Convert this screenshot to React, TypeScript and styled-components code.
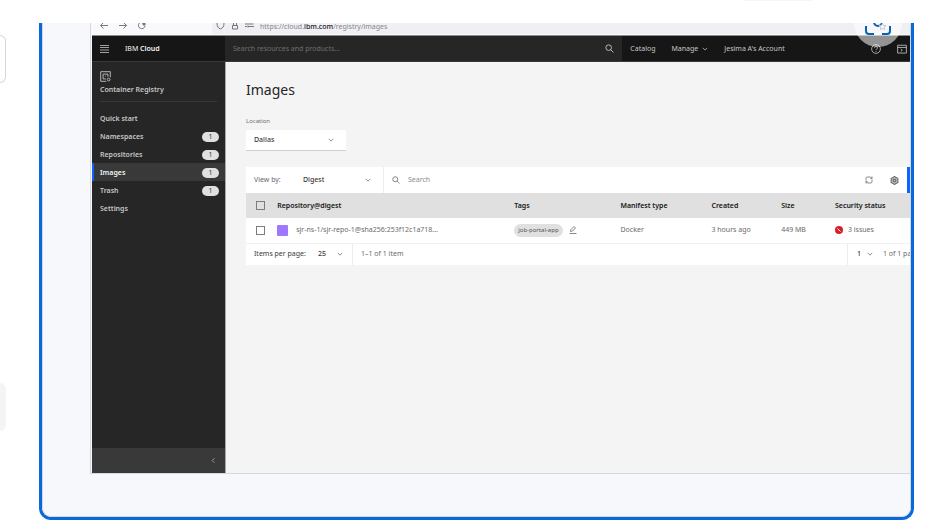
import React from "react";
import styled, { createGlobalStyle, css } from "styled-components";

const Global = createGlobalStyle`
  *, *::before, *::after { box-sizing: border-box; }
  body { margin: 0; background: #fff; }
  body, button, input, select { font-family: "Noto Sans", "Open Sans", sans-serif; font-size: 7px; line-height: 10px; }
  button, input, select { border: 0; margin: 0; padding: 0; background: none; color: inherit; border-radius: 0; outline: 0; }
  svg { display: block; flex: none; }
  h1, p { margin: 0; font-weight: 400; }
`;

const Page = styled.div`
  display: grid;
  grid-template-columns: 39px minmax(0, 1fr) 33px;
  grid-template-rows: 23px minmax(0, 1fr) 12px;
  height: 100vh;
  min-height: 320px;
`;
const PageHead = styled.div`
  grid-column: 1 / -1;
  display: flex;
  justify-content: flex-end;
  padding-right: 134px;
`;
const HeadTab = styled.div`
  width: 68px;
  height: 1px;
  background: #f6f6f7;
`;
const Rail = styled.div`
  display: flex;
  flex-direction: column;
  gap: 300px;
  padding-top: 12px;
`;
const RailCard = styled.div<{ $filled?: boolean }>`
  width: 6px;
  height: 48px;
  flex: none;
  border-radius: 0 8px 8px 0;
  ${(p) =>
    p.$filled
      ? css`background: #f3f4f6;`
      : css`border: 1px solid #d1d9e0; border-left: 0;`}
`;

const Frame = styled.section`
  position: relative;
  display: flex;
  border: 3px solid #0969da;
  border-top: 0;
  border-radius: 0 0 12px 12px;
  background: #f6f8fa;
  overflow: hidden;
`;
const FrameInner = styled.div`
  flex: 1;
  min-width: 0;
  display: flex;
  padding: 0 0 42px 47px;
  border: 1px solid #d5d9dc;
  border-top: 0;
  border-radius: 0 0 9px 9px;
  background: #f6f8fb;
`;
const Shot = styled.div`
  flex: 1;
  min-width: 0;
  display: flex;
  flex-direction: column;
  border: solid #d5d8dc;
  border-width: 0 0 1px 1px;
  padding-left: 1px;
  overflow: hidden;
`;

const BrowserBar = styled.div`
  display: flex;
  align-items: flex-start;
  height: 13px;
  flex: none;
  padding-left: 7px;
  background: #f9f9fb;
  color: #77777f;
  border-bottom: 1px solid #8b8b8d;
`;
const BarButtons = styled.div`
  display: flex;
  gap: 9px;
  width: 113px;
`;
const PlainButton = styled.button`
  display: flex;
  align-items: center;
  justify-content: center;
  flex: none;
`;
const Address = styled.div`
  flex: 1;
  display: flex;
  align-items: flex-start;
  gap: 6px;
  height: 11px;
  padding-left: 4px;
  background: #f0f0f4;
`;
const Url = styled.p`
  line-height: 7px;
  color: #85858d;
  white-space: nowrap;
  b { font-weight: 500; color: #15141a; }
`;

const TopNav = styled.header`
  display: flex;
  align-items: center;
  height: 26px;
  flex: none;
  background: #161616;
  border-bottom: 1px solid #393939;
  color: #c6c6c6;
  white-space: nowrap;
`;
const Brand = styled.div`
  display: flex;
  align-items: center;
  gap: 16px;
  width: 133px;
  flex: none;
  padding-left: 8px;
  color: #f4f4f4;
  b { font-weight: 600; }
`;
const NavSearch = styled.label`
  display: flex;
  align-items: center;
  align-self: stretch;
  flex: 397 1 0;
  min-width: 0;
  padding: 0 8px;
  background: #262626;
`;
const TextInput = styled.input<{ $tone: string }>`
  flex: 1;
  min-width: 0;
  &::placeholder { color: ${(p) => p.$tone}; opacity: 1; }
`;
const NavLinks = styled.nav`
  display: flex;
  align-items: center;
  gap: 16px;
  flex: 288 1 0;
  min-width: 0;
  padding: 0 3px 0 8px;
`;
const NavLink = styled.a`
  display: flex;
  align-items: center;
  gap: 4px;
  color: inherit;
  text-decoration: none;
`;
const NavIcons = styled.div`
  display: flex;
  gap: 16px;
  margin-left: auto;
`;

const Body = styled.div`
  display: flex;
  flex: 1;
  min-height: 0;
`;
const Sidebar = styled.aside`
  display: flex;
  flex-direction: column;
  width: 134px;
  flex: none;
  background: #262626;
  border-right: 1px solid #a8a8a8;
  color: #c6c6c6;
  font-weight: 600;
`;
const ServiceHead = styled.div`
  display: flex;
  flex-direction: column;
  gap: 3px;
  height: 40px;
  margin: 0 8px 7px;
  padding-top: 9px;
  border-bottom: 1px solid #393939;
`;
const SideItem = styled.a<{ $active?: boolean }>`
  display: flex;
  align-items: center;
  justify-content: space-between;
  height: 18px;
  padding: 2px 6px 0;
  border-left: 2px solid ${(p) => (p.$active ? "#0f62fe" : "transparent")};
  background: ${(p) => (p.$active ? "#393939" : "transparent")};
  color: ${(p) => (p.$active ? "#f4f4f4" : "inherit")};
  text-decoration: none;
`;
const Badge = styled.span`
  width: 17px;
  height: 10px;
  border-radius: 5px;
  background: #e0e0e0;
  color: #393939;
  font-weight: 400;
  text-align: center;
`;
const SideFoot = styled.div`
  display: flex;
  align-items: center;
  justify-content: flex-end;
  height: 25px;
  margin-top: auto;
  padding-right: 8px;
  background: #393939;
  color: #a8a8a8;
`;

const Main = styled.main`
  flex: 1;
  min-width: 0;
  padding: 18px 0 0 20px;
  background: #f4f4f4;
  color: #6a6a6a;
  overflow: hidden;
`;
const Title = styled.h1`
  font-size: 14px;
  line-height: 20px;
  color: #262626;
`;
const FieldLabel = styled.label`
  display: block;
  margin: 16px 0 4px;
  font-size: 6px;
  color: #6f6f6f;
`;
const SelectWrap = styled.div<{ $width: number; $pad: number; $boxed?: boolean }>`
  display: grid;
  align-items: center;
  flex: none;
  width: ${(p) => p.$width}px;
  padding-right: ${(p) => p.$pad}px;
  ${(p) => p.$boxed && css`height: 21px; padding-left: 8px; background: #fff; border-bottom: 1px solid #d0d0d0;`}
  > * { grid-area: 1 / 1; }
  > svg { justify-self: end; pointer-events: none; }
`;
const Select = styled.select`
  appearance: none;
  width: 100%;
  color: #393939;
  font-weight: 500;
`;

const Panel = styled.section`
  margin-top: 16px;
  background: #fff;
  white-space: nowrap;
`;
const Toolbar = styled.div`
  display: flex;
  align-items: center;
  height: 26px;
  padding-left: 8px;
`;
const ViewBy = styled.label`
  width: 49px;
  flex: none;
`;
const PanelSearch = styled.label`
  display: flex;
  align-items: center;
  gap: 8px;
  flex: 1;
  align-self: stretch;
  min-width: 0;
  padding-left: 8px;
  border-left: 1px solid #ededed;
`;
const Tools = styled.div`
  display: flex;
  gap: 17px;
  padding: 0 8px;
`;
const Primary = styled.button`
  width: 3px;
  align-self: stretch;
  background: #0f62fe;
`;
const Table = styled.table`
  width: 100%;
  table-layout: fixed;
  border-collapse: collapse;
  th, td { padding: 0; text-align: left; }
  th:first-child, td:first-child { padding-left: 10px; }
  th { height: 25px; background: #e0e0e0; color: #161616; font-weight: 600; }
  td { height: 25px; border-bottom: 1px solid #f0f0f0; }
`;
const Col = styled.col<{ $share: number }>`
  width: ${(p) => p.$share}%;
`;
const Check = styled.input`
  appearance: none;
  display: block;
  width: 9px;
  height: 9px;
  border: 1px solid #7c7c7c;
`;
const Cell = styled.div<{ $gap: number }>`
  display: flex;
  align-items: center;
  gap: ${(p) => p.$gap}px;
`;
const Swatch = styled.span`
  width: 11px;
  height: 11px;
  border-radius: 1px;
  background: #a078ff;
`;
const Tag = styled.span`
  height: 13px;
  padding: 0 4px;
  border-radius: 7px;
  background: #e0e0e0;
  color: #525252;
  font-size: 6px;
  line-height: 12px;
`;
const Pager = styled.div`
  display: flex;
  align-items: center;
  height: 21px;
  padding-left: 8px;
`;
const PagerLabel = styled.label`
  width: 64px;
  flex: none;
  color: #393939;
`;
const PagerSection = styled.div<{ $grow?: boolean }>`
  display: flex;
  align-items: center;
  align-self: stretch;
  flex: ${(p) => (p.$grow ? "1" : "0 0 63px")};
  min-width: 0;
  padding-left: ${(p) => (p.$grow ? 8 : 9)}px;
  border-left: 1px solid #ededed;
  overflow: hidden;
`;

const Lens = styled.div`
  position: absolute;
  top: -24px;
  right: 9px;
  display: flex;
  align-items: center;
  justify-content: center;
  width: 48px;
  height: 48px;
  border-radius: 50%;
  background: rgba(255, 255, 255, 0.54);
  pointer-events: none;
`;

const Glyph = ({ size = 10, w = 1.3, color = "currentColor", children }: { size?: number; w?: number; color?: string; children: React.ReactNode }) => (
  <svg width={size} height={size} viewBox="0 0 16 16" fill="none" stroke={color} strokeWidth={w} aria-hidden="true">
    {children}
  </svg>
);
const Chevron = () => <Glyph size={6} w={2}><path d="M2 5l6 6 6-6" /></Glyph>;
const Magnifier = ({ size = 9 }: { size?: number }) => (
  <Glyph size={size} w={1.6}><circle cx="6.5" cy="6.5" r="5" /><path d="M10.2 10.2l4.8 4.8" /></Glyph>
);

const sideItems: { label: string; count?: number; active?: boolean }[] = [
  { label: "Quick start" },
  { label: "Namespaces", count: 1 },
  { label: "Repositories", count: 1 },
  { label: "Images", count: 1, active: true },
  { label: "Trash", count: 1 },
  { label: "Settings" },
];
const columns = [
  { label: "Repository@digest", share: 35.7 },
  { label: "Tags", share: 16 },
  { label: "Manifest type", share: 13.7 },
  { label: "Created", share: 10.5 },
  { label: "Size", share: 8.1 },
  { label: "Security status", share: 11.3 },
];

export default function App() {
  return (
    <>
      <Global />
      <Page>
        <PageHead><HeadTab /></PageHead>
        <Rail><RailCard /><RailCard $filled /></Rail>
        <Frame>
          <FrameInner>
            <Shot>
              <BrowserBar>
                <BarButtons>
                  <PlainButton aria-label="Back"><svg width="10" height="7" viewBox="0 0 10 7" fill="none" stroke="currentColor"><path d="M9 2.5H1.5M4.500-.5l-3 3 3 3" /></svg></PlainButton>
                  <PlainButton aria-label="Forward"><svg width="10" height="7" viewBox="0 0 10 7" fill="none" stroke="currentColor"><path d="M1 2.500h7.500M5.500-.5l3 3-3 3" /></svg></PlainButton>
                  <PlainButton aria-label="Reload"><svg width="10" height="7" viewBox="0 0 10 7" fill="none" stroke="currentColor"><path d="M2.500 0A3.300 3.300 0 1 0 8 3" /><path d="M5 0h3.500v2.500H6z" fill="currentColor" stroke="none" /></svg></PlainButton>
                </BarButtons>
                <Address>
                  <svg width="9" height="7" viewBox="0 0 9 7" fill="none" stroke="currentColor"><path d="M1 0c0 3.500 1 5 3.500 6C7 5 8 3.500 8 0" /></svg>
                  <svg width="8" height="7" viewBox="0 0 8 7" fill="none" stroke="currentColor"><path d="M1.500 2.500h5v3.500h-5zM2.500 2.500V0M5.500 2.500V0" /></svg>
                  <svg width="9" height="7" viewBox="0 0 9 7" fill="none" stroke="currentColor"><path d="M0 1h5M7 1h1.500M3 3.500h6M0 3.500h2M6 0v2M3 2.500v2" /></svg>
                  <Url>https://cloud.<b>ibm.com</b>/registry/images</Url>
                </Address>
              </BrowserBar>
              <TopNav>
                <Brand>
                  <PlainButton aria-label="Menu">
                    <svg width="9" height="8" viewBox="0 0 9 8" stroke="#a0a0a0"><path d="M0 .5h9M0 2.500h9M0 5h9M0 7.500h9" /></svg>
                  </PlainButton>
                  <span>IBM <b>Cloud</b></span>
                </Brand>
                <NavSearch>
                  <TextInput $tone="#6f6f6f" aria-label="Search resources and products" placeholder="Search resources and products..." />
                  <Magnifier />
                </NavSearch>
                <NavLinks>
                  <NavLink href="#catalog">Catalog</NavLink>
                  <NavLink href="#manage">Manage <Chevron /></NavLink>
                  <NavLink href="#account">Jesima A's Account</NavLink>
                  <NavIcons>
                    <PlainButton aria-label="Help"><Glyph><circle cx="8" cy="8" r="7" /><path d="M5.700 6.500c0-3 4.800-3 4.800-.3C10.500 8 8 7.700 8 9.500M8 11v1.500" /></Glyph></PlainButton>
                    <PlainButton aria-label="Cloud Shell"><Glyph><path d="M1 2h14v12.500H1zM1 5.500h14M6 8l2.500 2L6 12" /></Glyph></PlainButton>
                  </NavIcons>
                </NavLinks>
              </TopNav>
              <Body>
                <Sidebar>
                  <ServiceHead>
                    <Glyph size={11}><path d="M9 15H1V1h14v8M8.500 11.500h-4v-7h7v4M7.500 7.500h1" /><circle cx="12.500" cy="12.500" r="2" /></Glyph>
                    <span>Container Registry</span>
                  </ServiceHead>
                  {sideItems.map((s) => (
                    <SideItem key={s.label} href="#" $active={s.active}>
                      {s.label}{s.count && <Badge>{s.count}</Badge>}
                    </SideItem>
                  ))}
                  <SideFoot><PlainButton aria-label="Collapse"><Glyph size={7} w={2}><path d="M10 3L5 8l5 5" /></Glyph></PlainButton></SideFoot>
                </Sidebar>
                <Main>
                  <Title>Images</Title>
                  <FieldLabel htmlFor="location">Location</FieldLabel>
                  <SelectWrap $width={100} $pad={12} $boxed>
                    <Select id="location"><option>Dallas</option></Select>
                    <Chevron />
                  </SelectWrap>
                  <Panel>
                    <Toolbar>
                      <ViewBy htmlFor="view">View by:</ViewBy>
                      <SelectWrap $width={80} $pad={12}>
                        <Select id="view"><option>Digest</option></Select>
                        <Chevron />
                      </SelectWrap>
                      <PanelSearch>
                        <Magnifier size={8} />
                        <TextInput $tone="#8d8d8d" aria-label="Search images" placeholder="Search" />
                      </PanelSearch>
                      <Tools>
                        <PlainButton aria-label="Refresh"><Glyph size={8} w={1.600}><path d="M2 9V5a3 3 0 0 1 3-3h6l3 3M14 7v4a3 3 0 0 1-3 3H5l-3-3M14 1v4h-3M2 15v-4h3" /></Glyph></PlainButton>
                        <PlainButton aria-label="Settings"><Glyph size={9} w={2}><path d="M8 1l6 3.500v7L8 15l-6-3.500v-7z" fill="#c6c6c6" /><circle cx="8" cy="8" r="2.500" /></Glyph></PlainButton>
                      </Tools>
                      <Primary aria-label="Create" />
                    </Toolbar>
                    <Table>
                      <colgroup>
                        <Col $share={4.7} />
                        {columns.map((c) => <Col key={c.label} $share={c.share} />)}
                      </colgroup>
                      <thead>
                        <tr>
                          <th><Check type="checkbox" aria-label="Select all" /></th>
                          {columns.map((c) => <th key={c.label}>{c.label}</th>)}
                        </tr>
                      </thead>
                      <tbody>
                        <tr>
                          <td><Check type="checkbox" aria-label="Select image" /></td>
                          <td><Cell $gap={8}><Swatch />sjr-ns-1/sjr-repo-1@sha256:253f12c1a718...</Cell></td>
                          <td>
                            <Cell $gap={6}>
                              <Tag>job-portal-app</Tag>
                              <PlainButton aria-label="Edit tags"><Glyph size={8} w={1.600}><path d="M3 11l1-4 6-6 3 3-6 6zM1 15h14" /></Glyph></PlainButton>
                            </Cell>
                          </td>
                          <td>Docker</td>
                          <td>3 hours ago</td>
                          <td>449 MB</td>
                          <td>
                            <Cell $gap={5}>
                              <Glyph size={8} w={2} color="#fff"><circle cx="8" cy="8" r="8" fill="#da1e28" stroke="none" /><path d="M5 5l6 6" /></Glyph>
                              3 issues
                            </Cell>
                          </td>
                        </tr>
                      </tbody>
                    </Table>
                    <Pager>
                      <PagerLabel htmlFor="size">Items per page:</PagerLabel>
                      <SelectWrap $width={34} $pad={9}>
                        <Select id="size"><option>25</option></Select>
                        <Chevron />
                      </SelectWrap>
                      <PagerSection $grow>1–1 of 1 item</PagerSection>
                      <PagerSection>
                        <SelectWrap $width={26} $pad={10}>
                          <Select aria-label="Page"><option>1</option></Select>
                          <Chevron />
                        </SelectWrap>
                        1 of 1 page
                      </PagerSection>
                    </Pager>
                  </Panel>
                </Main>
              </Body>
            </Shot>
          </FrameInner>
          <Lens>
            <svg width="26" height="26" viewBox="0 0 26 26" fill="none" stroke="#0860b8" strokeWidth="2">
              <path d="M1 9V4a3 3 0 0 1 3-3h5M17 1h5a3 3 0 0 1 3 3v5M1 16v5a3 3 0 0 0 3 3h5M17 24h5a3 3 0 0 0 3-3v-5" />
              <circle cx="13" cy="12" r="4" />
              <path d="M17.500 13.500l1 2 2.500.2-2 1.600.5 2.200-2-1-2 1 .5-2.200-2-1.600 2.500-.2z" stroke="#c0c4ca" fill="#fff" strokeWidth="1" />
            </svg>
          </Lens>
        </Frame>
      </Page>
    </>
  );
}
